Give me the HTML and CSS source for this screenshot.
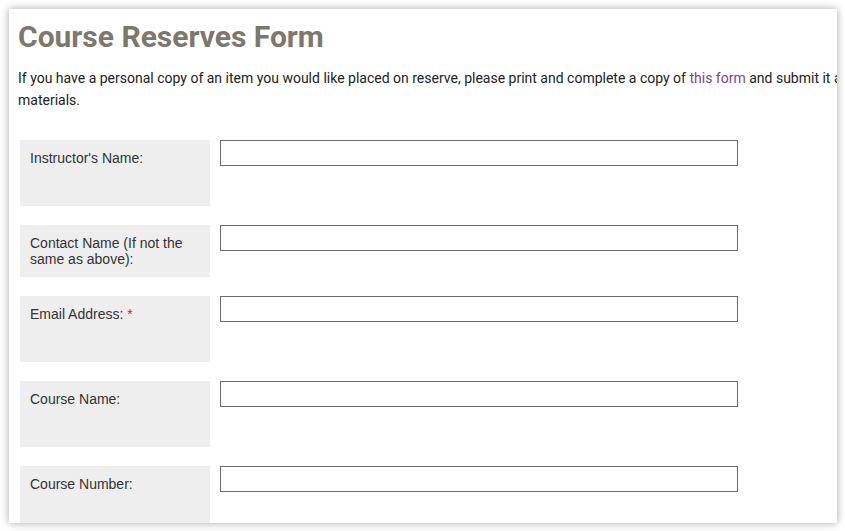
FILE: index.html
```html
<!DOCTYPE html>
<html lang="en">
<head>
    <meta charset="UTF-8">
    <meta name="viewport" content="width=device-width, initial-scale=1.0">
    <title>Course Reserves Form</title>
    <link rel="stylesheet" href="styles.css">
</head>
<body>
    <div class="panel">
        <h1>Course Reserves Form</h1>
        <p class="intro">If you have a personal copy of an item you would like placed on reserve, please print and complete a copy of <a href="#">this form</a> and submit it at the Circulation Desk with your<br>materials.</p>
        <form class="reserve-form">
            <div class="row">
                <label class="field-label" for="instructor">Instructor's Name:</label>
                <input type="text" id="instructor" name="instructor">
            </div>
            <div class="row">
                <label class="field-label short" for="contact">Contact Name (If not the same as above):</label>
                <input type="text" id="contact" name="contact">
            </div>
            <div class="row">
                <label class="field-label" for="email">Email Address: <span class="required">*</span></label>
                <input type="text" id="email" name="email">
            </div>
            <div class="row">
                <label class="field-label" for="course-name">Course Name:</label>
                <input type="text" id="course-name" name="course-name">
            </div>
            <div class="row">
                <label class="field-label" for="course-number">Course Number:</label>
                <input type="text" id="course-number" name="course-number">
            </div>
        </form>
    </div>
</body>
</html>
```

FILE: styles.css
```css
html, body {
    height: 100%;
}

body {
    margin: 0;
    padding: 9px 8px 8px 9px;
    box-sizing: border-box;
    background: #fff;
    font-family: Roboto, "Liberation Sans", Arial, sans-serif;
    overflow: hidden;
}

.panel {
    background: #fff;
    box-shadow: 0 0 8px rgba(0, 0, 0, 0.35);
    height: 514px;
    width: 828px;
    padding: 8px 9px;
    box-sizing: border-box;
    overflow: hidden;
}

h1 {
    margin: 0;
    font-size: 30px;
    line-height: 40px;
    font-weight: 700;
    color: #7d786b;
    white-space: nowrap;
}

.intro {
    margin: 10px 0 0;
    font-size: 14px;
    line-height: 22px;
    color: #222;
    white-space: nowrap;
}

.intro a {
    color: #7b4397;
    text-decoration: none;
}

/* label + input rows */
.reserve-form {
    margin: 29px 0 0 2px;
}

.row {
    display: grid;
    grid-template-columns: 190px 518px;
    column-gap: 10px;
    align-items: start;
    margin-bottom: 19px;
}

.field-label {
    background: #eee;
    padding: 10px;
    min-height: 46px;
    font-family: "Liberation Sans", Arial, sans-serif;
    font-size: 14px;
    line-height: 16px;
    color: #333;
}

.field-label.short {
    min-height: 0;
}

.required {
    color: #e4141b;
}

.row input {
    height: 26px;
    box-sizing: border-box;
    border: 1px solid #6b6b6b;
    border-radius: 0;
    margin: 0;
    padding: 2px 6px;
    font-size: 14px;
}
```
